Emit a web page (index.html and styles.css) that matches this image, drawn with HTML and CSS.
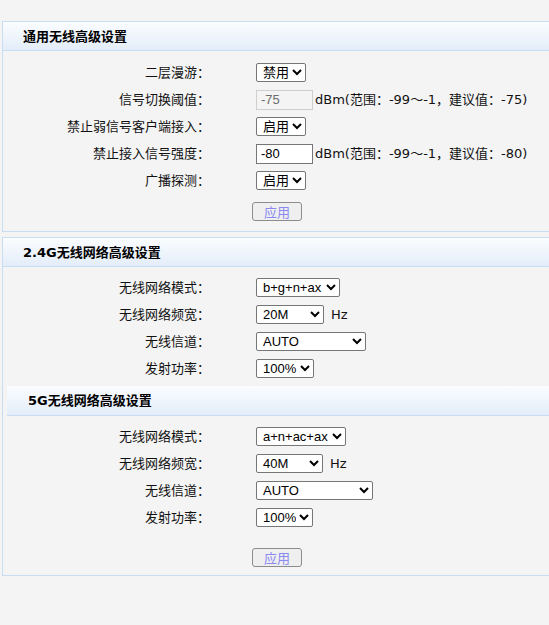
FILE: index.html
```html
<!doctype html>
<html lang="zh-cn">
<head>
	<meta charset="utf-8">
	<title>无线高级设置</title>
	<link rel="stylesheet" href="styles.css">
</head>
<body>

<div class="box box-first">
	<div class="head">通用无线高级设置</div>
	<div class="body">
		<div class="row">
			<span class="lbl">二层漫游：</span>
			<span class="ctl"><select class="w50"><option>禁用</option><option>启用</option></select></span>
		</div>
		<div class="row">
			<span class="lbl">信号切换阈值：</span>
			<span class="ctl"><input type="text" class="txt" value="-75" disabled>dBm(范围：-99～-1，建议值：-75)</span>
		</div>
		<div class="row">
			<span class="lbl">禁止弱信号客户端接入：</span>
			<span class="ctl"><select class="w50"><option>启用</option><option>禁用</option></select></span>
		</div>
		<div class="row">
			<span class="lbl">禁止接入信号强度：</span>
			<span class="ctl"><input type="text" class="txt" value="-80">dBm(范围：-99～-1，建议值：-80)</span>
		</div>
		<div class="row">
			<span class="lbl">广播探测：</span>
			<span class="ctl"><select class="w50"><option>启用</option><option>禁用</option></select></span>
		</div>
		<div class="btnrow"><button class="btn" type="button">应用</button></div>
	</div>
</div>

<div class="box box-second">
	<div class="head">2.4G无线网络高级设置</div>
	<div class="body body-24">
		<div class="row">
			<span class="lbl">无线网络模式：</span>
			<span class="ctl"><select class="w84"><option>b+g+n+ax</option></select></span>
		</div>
		<div class="row">
			<span class="lbl">无线网络频宽：</span>
			<span class="ctl"><select class="w68"><option>20M</option><option>40M</option></select><span class="unit">Hz</span></span>
		</div>
		<div class="row">
			<span class="lbl">无线信道：</span>
			<span class="ctl"><select class="w110"><option>AUTO</option></select></span>
		</div>
		<div class="row">
			<span class="lbl">发射功率：</span>
			<span class="ctl"><select class="w58"><option>100%</option></select></span>
		</div>
	</div>

	<div class="head sub">5G无线网络高级设置</div>
	<div class="body body-5g">
		<div class="row">
			<span class="lbl">无线网络模式：</span>
			<span class="ctl"><select class="w90"><option>a+n+ac+ax</option></select></span>
		</div>
		<div class="row">
			<span class="lbl">无线网络频宽：</span>
			<span class="ctl"><select class="w67"><option>40M</option><option>20M</option></select><span class="unit">Hz</span></span>
		</div>
		<div class="row">
			<span class="lbl">无线信道：</span>
			<span class="ctl"><select class="w117"><option>AUTO</option></select></span>
		</div>
		<div class="row">
			<span class="lbl">发射功率：</span>
			<span class="ctl"><select class="w57"><option>100%</option></select></span>
		</div>
		<div class="btnrow btnrow-last"><button class="btn" type="button">应用</button></div>
	</div>
</div>

</body>
</html>
```

FILE: styles.css
```css
*{ padding: 0; margin: 0; box-sizing: border-box }
html, body{ background: #f4f4f4; overflow: hidden }
body{ font-family: "DejaVu Sans", "Noto Sans CJK SC", sans-serif; font-size: 13px; color: #111; padding-top: 21px }

.box{ margin: 0 -20px 0 2px; border: 1px solid #c9ddf2; border-right: none }
.box-second{ margin-top: 5px }

.head{ height: 29px; line-height: 29px; padding-left: 20px; font-weight: bold; font-size: 13px; color: #000;
	background: linear-gradient(#fbfdff, #e3edf9); border-bottom: 1px solid #c9ddf2 }
.head.sub{ margin: 4px 0 0 4px; padding-left: 21px; height: 30px; line-height: 30px }

.body{ padding: 8px 0 10px 0 }
.body-24{ padding: 7px 0 0 0 }
.body-5g{ padding: 7px 0 8px 0 }

.row{ display: flex; align-items: center; height: 27px }
.lbl{ width: 207px; text-align: right; line-height: 27px }
.ctl{ margin-left: 46px; display: flex; align-items: center; white-space: nowrap; line-height: 20px }
.unit{ margin-left: 7px }

select{ font-family: "Liberation Sans", "Noto Sans CJK SC", sans-serif; font-size: 13px; height: 19px; color: #000;
	border: 1px solid #767676; border-radius: 2px; background: #fff; padding: 0 0 0 2px }
.w50{ width: 50px }
.w84{ width: 84px }
.w68{ width: 68px }
.w110{ width: 110px }
.w58{ width: 58px }
.w90{ width: 90px }
.w67{ width: 67px }
.w117{ width: 117px }
.w57{ width: 57px }

.txt{ width: 57px; height: 20px; font-family: "Liberation Sans", sans-serif; font-size: 13px; padding: 0 0 0 4px;
	border: 1px solid #767676; background: #fff; color: #000; margin-right: 2px; outline: none }
.txt:disabled{ border-color: #cfcfcf; background: #f4f4f4; color: #6d6d6d }

.btnrow{ padding-left: 249px; margin-top: 8px }
.btnrow-last{ margin-top: 17px }
.btn{ width: 50px; height: 19px; line-height: 17px; font-family: "Noto Sans CJK SC", sans-serif; font-size: 13px;
	color: #8a8af2; background: #efefef; border: 1px solid #8c8c8c; border-radius: 3px }
```
